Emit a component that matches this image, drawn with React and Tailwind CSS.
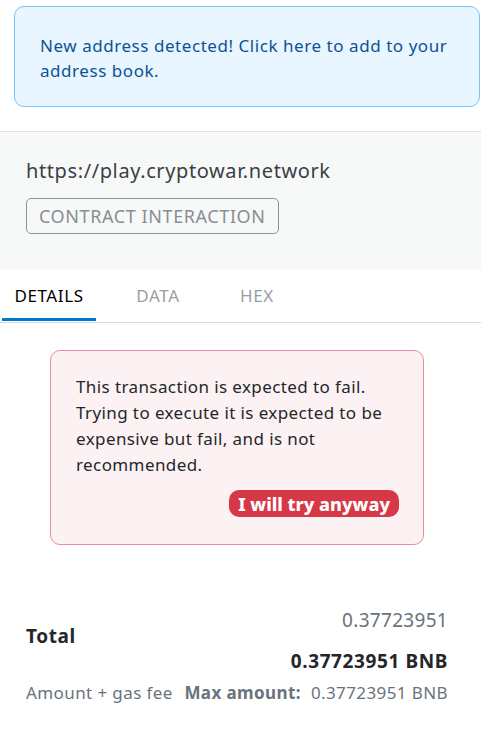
import React from 'react'

const font = { fontFamily: '"Noto Sans", "Open Sans", sans-serif' }

const App = () => {
  return (
    <div className="w-[481px] h-[737px] bg-white overflow-hidden" style={font}>
      {/* New address banner */}
      <div className="pt-[6px] pl-[14px] pr-[1px]">
        <div className="h-[101px] rounded-[10px] border border-[#75c4fd] bg-[#e9f5ff] pl-[25px] pr-4 pt-[26px] text-[17px] leading-[25px] tracking-[0.55px] text-[#0c5395]">
          New address detected! Click here to add to your address book.
        </div>
      </div>

      {/* Origin */}
      <div className="mt-[24px] border-t border-[#dcdfe2] bg-[#f7f9f9] h-[139px] pl-[26px] pt-[26px]">
        <p className="text-[20px] leading-[26px] tracking-[0.6px] text-[#3b3f44]">https://play.cryptowar.network</p>
        <div className="mt-[14px] inline-flex h-[36px] items-center rounded-[5px] border border-[#8f9398] px-[12px] text-[18px] tracking-[0.6px] text-[#8a8d91]">
          CONTRACT INTERACTION
        </div>
      </div>

      {/* Tabs */}
      <div className="flex h-[53px] border-b border-[#d6d9dc] text-[17px] tracking-[0.6px]">
        <div className="relative w-[94px] ml-[2px] flex items-center justify-center text-[#000]">
          DETAILS
          <div className="absolute bottom-[1px] left-0 right-0 h-[3px] bg-[#0376c9]" />
        </div>
        <div className="w-[124px] flex items-center justify-center text-[#9a9da1]">DATA</div>
        <div className="w-[74px] flex items-center justify-center text-[#9a9da1]">HEX</div>
      </div>

      {/* Error */}
      <div className="pt-[27px] pl-[50px] pr-[57px]">
        <div className="h-[195px] rounded-[10px] border border-[#e88f97] bg-[#fcf2f3] pl-[25px] pr-[24px] pt-[23px]">
          <p className="text-[17px] leading-[26px] tracking-[0.4px] text-[#24272a]">
            This transaction is expected to fail. Trying to execute it is expected to be expensive but fail, and is not recommended.
          </p>
          <div className="flex justify-end mt-[12px]">
            <button className="h-[27px] rounded-[10px] bg-[#d73847] px-[9px] text-[18px] font-extrabold text-white leading-none">
              I will try anyway
            </button>
          </div>
        </div>
      </div>

      {/* Total */}
      <div className="mt-[62px] pl-[26px] pr-[33px]">
        <div className="flex justify-between">
          <span className="self-start mt-[16px] text-[19px] leading-[26px] font-bold tracking-[0.6px] text-[#24272a]">Total</span>
          <div className="flex flex-col items-end">
            <span className="text-[19px] leading-[26px] tracking-[0.3px] text-[#6a737d]">0.37723951</span>
            <span className="mt-[15px] text-[19px] leading-[26px] font-bold tracking-[0.6px] text-[#24272a]">0.37723951 BNB</span>
          </div>
        </div>
        <div className="mt-[8px] flex items-center justify-between text-[17px] leading-[22px] tracking-[0.4px] text-[#6a737d]">
          <span>Amount + gas fee</span>
          <span>
            <span className="font-bold mr-[10px]">Max amount:</span>0.37723951 BNB
          </span>
        </div>
      </div>
    </div>
  )
}

export default App
